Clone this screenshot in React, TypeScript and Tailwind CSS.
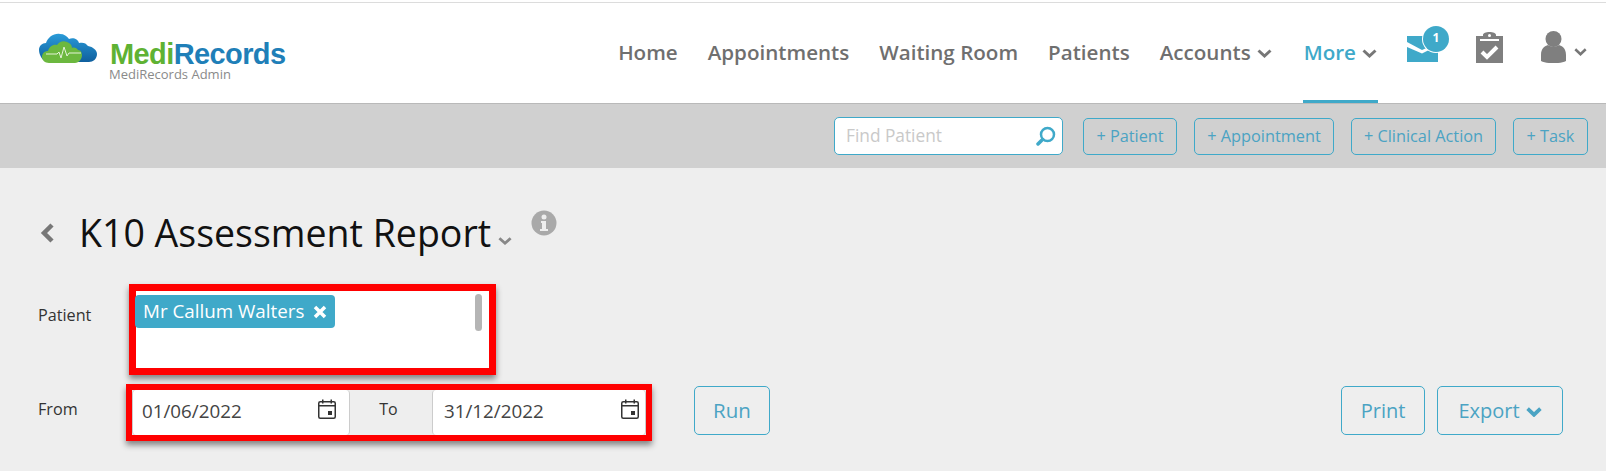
function Caret({ className, width = 15, height = 9, stroke = 3 }: { className?: string; width?: number; height?: number; stroke?: number }) {
    return (
        <svg width={width} height={height} viewBox="0 0 15 9" fill="none" className={className} preserveAspectRatio="none">
            <path d="M1.500 1.500L7.500 7L13.500 1.500" stroke="currentColor" strokeWidth={stroke} />
        </svg>
    );
}

function Logo() {
    return (
        <div className="relative ml-[38px] h-[50px] w-[250px]">
            <svg width="62" height="34" viewBox="0 0 62 34" className="absolute top-[5px] left-0">
                <defs>
                    <linearGradient id="blueCloud" x1="0" y1="0" x2="0" y2="1">
                        <stop offset="0" stopColor="#2a9bd8" />
                        <stop offset="1" stopColor="#0f5f9e" />
                    </linearGradient>
                </defs>
                <path
                    d="M1 17c0-4 3-7 7-7 2-6 8-10 14-9 4 0 7 2 9 5 4-2 9 0 10 4 4-1 7 0 9 3 5 1 9 4 9 8 0 5-4 8-8 8H10C5 29 1 22 1 17z"
                    fill="url(#blueCloud)"
                />
                <path
                    d="M4 24c0-4 3-6 6-6 1-4 5-7 9-6 2-3 6-5 10-3 3 1 5 3 5 6 2-1 5 0 6 2 3 0 4 3 4 5 0 4-3 8-7 8H11c-4 0-7-3-7-6z"
                    fill="#6cb83f"
                />
                <path d="M8 21h11l2-2 2 6 3-11 3 9 2-3h12" fill="none" stroke="#e4f2d8" strokeWidth="1" />
            </svg>
            <div className="absolute top-[14px] left-[72px] font-['Liberation_Sans',sans-serif] text-[29px] leading-[24px] font-bold tracking-[-0.6px]">
                <span className="inline-block text-[#5fb233]">Medi</span>
                <span className="inline-block text-[#1f7fb8]">Records</span>
            </div>
            <div className="absolute top-[38px] left-[71px] text-[13px] leading-[16px] text-[#8a8a8a]">
                MediRecords Admin
            </div>
        </div>
    );
}

function NavLink({ label, caret, active, className = "" }: { label: string; caret?: boolean; active?: boolean; className?: string }) {
    return (
        <a
            href="#"
            className={`flex h-full items-center border-b-[3px] pt-[1px] text-[20.6px] font-semibold ${
                active ? "border-[#3fa9c9] text-[#3fa9c9]" : "border-transparent text-[#6f6f6f]"
            } ${className}`}
        >
            {label}
            {caret && <Caret className="mt-[2px] ml-[6px] text-[#777]" />}
        </a>
    );
}

function MailIcon() {
    return (
        <div className="relative mb-[15px] ml-[29px] h-[40px] w-[42px]">
            <svg width="31" height="26" viewBox="0 0 31 26" className="absolute top-[10px] left-0">
                <rect width="31" height="26" fill="#3fa9c9" />
                <polygon points="0,6 15,14 23,10.500 23,13.500 15,17.500 0,11" fill="#fff" />
            </svg>
            <div className="absolute top-0 left-[16px] flex h-[26px] w-[26px] items-center justify-center rounded-full bg-[#3fa9c9] pb-[1px] text-[12px] font-bold text-white ring-1 ring-white">
                1
            </div>
        </div>
    );
}

function ClipboardIcon() {
    return (
        <svg width="27" height="31" viewBox="0 0 27 31" className="mb-[12px] ml-[27px]">
            <path d="M0 4h7V3c0-2 3-3 6.500-3S20 1 20 3v1h7v27H0z" fill="#7f7f7f" />
            <rect x="4" y="7" width="19" height="2" fill="#fff" />
            <circle cx="13.500" cy="3.500" r="1.500" fill="#fff" />
            <path d="M6 20l5 5 10-10" fill="none" stroke="#fff" strokeWidth="4" />
        </svg>
    );
}

function UserIcon() {
    return (
        <svg width="25" height="32" viewBox="0 0 25 32" className="mb-[12px] ml-[38px]">
            <circle cx="12.500" cy="8" r="8" fill="#7f7f7f" />
            <path d="M0 24c0-7 4-9 7-10 3 2 8 2 11 0 3 1 7 3 7 10v6c-6 3-19 3-25 0z" fill="#7f7f7f" />
        </svg>
    );
}

function ToolButton({ label, width }: { label: string; width: string }) {
    return (
        <button className={`flex h-[37px] items-center justify-center rounded-[5px] border border-[#3fa9c9] text-[16.3px] text-[#4ba3c3] ${width}`}>
            {label}
        </button>
    );
}

function CalendarIcon() {
    return (
        <svg width="18" height="20" viewBox="0 0 18 20" className="mb-[5px] shrink-0">
            <rect x="0.750" y="2.750" width="16.500" height="16.500" rx="1.500" fill="none" stroke="#333" strokeWidth="1.500" />
            <rect x="1" y="6" width="16" height="1.500" fill="#333" />
            <rect x="4" y="0.500" width="1.500" height="4" fill="#333" />
            <rect x="12.500" y="0.500" width="1.500" height="4" fill="#333" />
            <rect x="10" y="12" width="4" height="4" fill="#333" />
        </svg>
    );
}

function DateInput({ value, className }: { value: string; className: string }) {
    return (
        <div className={`flex h-[45px] items-center justify-between rounded-[4px] border-r border-l border-[#ccc] bg-white pb-[3px] text-[18.8px] text-[#444] ${className}`}>
            {value}
            <CalendarIcon />
        </div>
    );
}

export default function App() {
    return (
        <div className="flex h-[471px] w-[1606px] flex-col overflow-hidden bg-[#eeeeee] font-['Open_Sans',sans-serif]">
            {/* Header */}
            <div className="h-[2px] bg-white" />
            <div className="flex h-[102px] items-center border-t border-b border-t-[#dcdcdc] border-b-[#b9b9b9] bg-white">
                <Logo />
                <nav className="ml-auto flex h-full items-center gap-[30px]">
                    <NavLink label="Home" />
                    <NavLink label="Appointments" />
                    <NavLink label="Waiting Room" />
                    <NavLink label="Patients" />
                    <NavLink label="Accounts" caret />
                    <NavLink label="More" caret active className="ml-[1px] px-[1px]" />
                </nav>
                <MailIcon />
                <ClipboardIcon />
                <UserIcon />
                <Caret width={13} height={8} className="mr-[19px] mb-[3px] ml-[8px] text-[#777]" />
            </div>

            {/* Toolbar */}
            <div className="flex h-[64px] items-center justify-end gap-[17px] bg-[#d0d0d0] pr-[18px]">
                <div className="mr-[3px] flex h-[38px] w-[229px] items-center justify-between rounded-[5px] border border-[#3fa9c9] bg-white pr-[6px] pl-[11px] text-[17.3px] text-[#c9c9c9]">
                    Find Patient
                    <svg width="20" height="20" viewBox="0 0 20 20">
                        <circle cx="11.500" cy="8.500" r="6.500" fill="none" stroke="#3fa9c9" strokeWidth="2.500" />
                        <path d="M6.500 13.500L2 18" stroke="#3fa9c9" strokeWidth="3.500" strokeLinecap="round" />
                    </svg>
                </div>
                <ToolButton label="+ Patient" width="w-[94px]" />
                <ToolButton label="+ Appointment" width="w-[140px]" />
                <ToolButton label="+ Clinical Action" width="w-[145px]" />
                <ToolButton label="+ Task" width="w-[75px]" />
            </div>

            {/* Title */}
            <div className="mt-[40px] flex h-[50px] items-center pl-[40px]">
                <svg width="14" height="20" viewBox="0 0 14 20" fill="none" className="text-[#777]">
                    <path d="M12 2L4 10L12 18" stroke="currentColor" strokeWidth="4.500" />
                </svg>
                <h1 className="ml-[25px] text-[37.5px] leading-[50px] text-[#111]">K10 Assessment Report</h1>
                <Caret width={14} height={8} className="mt-[16px] ml-[7px] text-[#888]" />
                <svg width="26" height="26" viewBox="0 0 26 26" className="mt-[-20px] ml-[19px]">
                    <circle cx="13" cy="13" r="12.500" fill="#a9a9a9" />
                    <circle cx="13" cy="7" r="2.500" fill="#eee" />
                    <path d="M10 11h5v8h2v2H9v-2h2v-6h-1z" fill="#eee" />
                </svg>
            </div>

            {/* Patient row */}
            <div className="mt-[26px] flex items-start pl-[38px]">
                <div className="mt-[20px] w-[91px] text-[16.2px] leading-[22px] text-[#333]">Patient</div>
                <div className="h-[91px] w-[367px] border-[7px] border-[#ff0000] bg-white shadow-[0_4px_6px_rgba(0,0,0,0.45)]">
                    <div className="flex items-start justify-between pr-[7px]">
                        <div className="mt-[4px] -ml-[1px] flex h-[33px] w-[200px] items-center rounded-[4px] bg-[#3fa9c9] pb-[1px] pl-[8px] text-[18.8px] text-white">
                            Mr Callum Walters
                            <svg width="14" height="14" viewBox="0 0 14 14" className="mt-[2px] ml-[9px]">
                                <path d="M2 2L12 12M12 2L2 12" stroke="#fff" strokeWidth="3.500" />
                            </svg>
                        </div>
                        <div className="mt-[3px] h-[37px] w-[7px] rounded-full bg-[#b5b5b5]" />
                    </div>
                </div>
            </div>

            {/* Date row */}
            <div className="mt-[9px] flex items-start pr-[43px] pl-[38px]">
                <div className="mt-[14px] w-[88px] text-[16.2px] leading-[22px] text-[#333]">From</div>
                <div className="flex h-[57px] w-[526px] items-center border-[6px] border-[#ff0000] bg-[#eeeeee] shadow-[0_4px_6px_rgba(0,0,0,0.45)]">
                    <DateInput value="01/06/2022" className="w-[218px] pr-[13px] pl-[9px]" />
                    <div className="flex-1 pr-[5px] pb-[8px] text-center text-[16px] text-[#333]">To</div>
                    <DateInput value="31/12/2022" className="w-[214px] pr-[6px] pl-[11px]" />
                </div>
                <button className="mt-[2px] ml-[42px] h-[49px] w-[76px] rounded-[5px] border border-[#3fa9c9] text-[20.5px] text-[#4ba3c3]">
                    Run
                </button>
                <button className="mt-[2px] ml-auto h-[49px] w-[84px] rounded-[5px] border border-[#3fa9c9] text-[20px] text-[#4ba3c3]">
                    Print
                </button>
                <button className="mt-[2px] ml-[12px] flex h-[49px] w-[126px] items-center justify-center rounded-[5px] border border-[#3fa9c9] text-[20px] text-[#4ba3c3]">
                    Export
                    <Caret width={16} height={10} stroke={3.500} className="mt-[2px] ml-[6px]" />
                </button>
            </div>
        </div>
    );
}
